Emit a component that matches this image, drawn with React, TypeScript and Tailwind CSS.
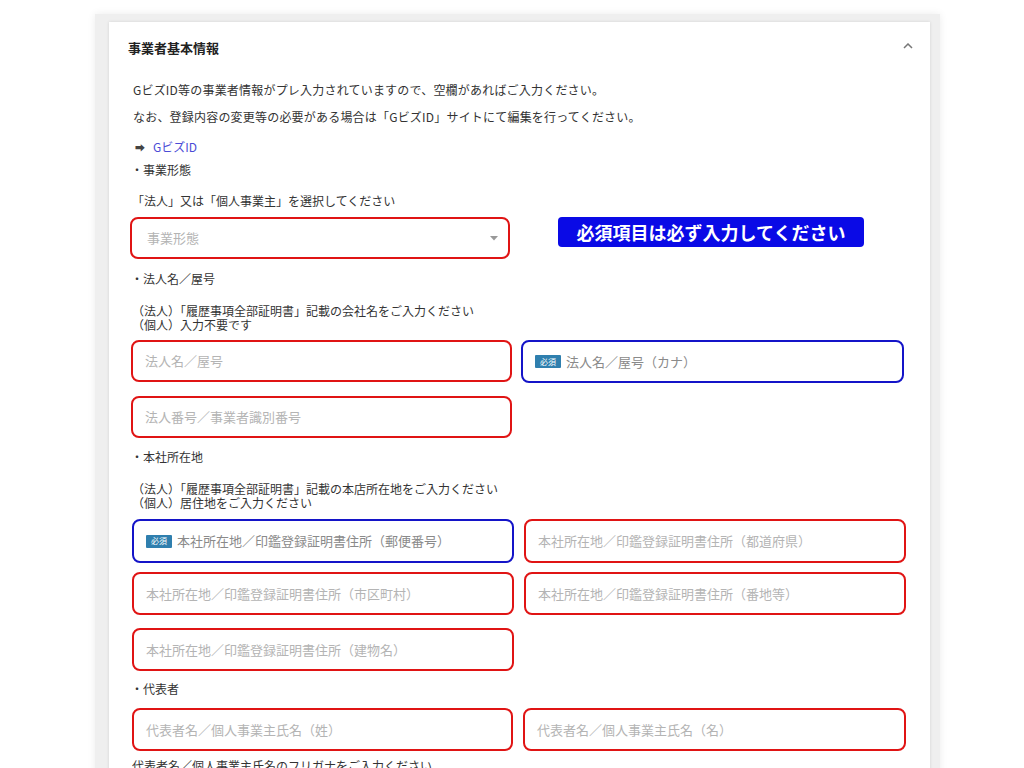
const font = { fontFamily: '"Noto Sans CJK JP", "Noto Sans", sans-serif' }

function Badge() {
  return (
    <span className="inline-flex items-center justify-center w-[26px] h-[13px] mr-[5px] bg-[#2f7fae] text-white text-[8px] leading-none rounded-[1px]">
      必須
    </span>
  )
}

interface FieldProps {
  label: string
  tone?: 'red' | 'blue'
  required?: boolean
  h?: string
}

function Field({ label, tone = 'red', required = false, h = 'h-[43px]' }: FieldProps) {
  const border = tone === 'blue' ? 'border-[#1414c8]' : 'border-[#e01414]'
  return (
    <div className={`${h} ${border} border-2 rounded-[8px] bg-white flex items-center pl-[12px]`}>
      {required && <Badge />}
      <span className={`text-[13px] ${required ? 'text-[#8a8a8a]' : 'text-[#b4b4b4]'}`}>{label}</span>
    </div>
  )
}

export default function App() {
  return (
    <div className="min-h-[768px] bg-white" style={font}>
      <div className="ml-[95px] mt-[14px] w-[845px] bg-[#efefef] pt-[8px] pl-[14px] pr-[10px] shadow-[0_0_8px_rgba(0,0,0,0.08)]">
        <div className="w-[821px] bg-white shadow-[0_0_3px_rgba(0,0,0,0.12)] pb-[20px]">
          <div className="h-[52px] flex items-center justify-between pl-[19px] pr-[17px]">
            <div className="text-[13px] font-bold text-[#222]">事業者基本情報</div>
            <svg width="10" height="6" viewBox="0 0 10 6" className="mb-[4px]">
              <polyline points="1,5 5,1 9,5" fill="none" stroke="#777" strokeWidth="1.5" />
            </svg>
          </div>

          <div className="pl-[23px] pr-[25px] text-[12px] text-[#333]">
            <div className="mt-[1.5px] leading-[27px] pl-[1px] tracking-[0.2px]">
              <div>Gビズ​ID等の事業者情報がプレ入力されていますので、空欄があればご入力ください。</div>
              <div>なお、登録内容の変更等の必要がある場合は「Gビズ​ID」サイトにて編集を行ってください。</div>
            </div>

            <div className="mt-[8.5px] h-[18px] flex items-center pl-[3px]">
              <span className="text-[10px] text-[#444]">➡</span>
              <span className="ml-[8px] text-[#4b4bd6]">Gビズ​ID</span>
            </div>

            <div className="mt-[5px] h-[18px] leading-[18px] -ml-[1px]">・事業形態</div>
            <div className="mt-[13px] h-[18px] leading-[18px]">「法人」又は「個人事業主」を選択してください</div>

            <div className="mt-[7px] w-[380px] h-[42px] -ml-[2px] border-2 border-[#e01414] rounded-[8px] flex items-center justify-between pl-[15px] pr-[10px]">
              <span className="text-[13px] text-[#b4b4b4]">事業形態</span>
              <svg width="8" height="5" viewBox="0 0 8 5">
                <polygon points="0,0 8,0 4,4.5" fill="#999" />
              </svg>
            </div>

            <div className="relative">
              <div className="absolute left-[426px] -top-[42px] w-[306px] h-[30px] rounded-[4px] bg-[#0a0ae6] text-white text-[18px] font-bold flex items-center justify-center">
                必須項目は必ず入力してください
              </div>
            </div>

            <div className="mt-[11px] h-[18px] leading-[18px] -ml-[1px]">・法人名／屋号</div>
            <div className="mt-[16px] leading-[14px]">
              <div>（法人）「履歴事項全部証明書」記載の会社名をご入力ください</div>
              <div>（個人）入力不要です</div>
            </div>

            <div className="mt-[8px] grid grid-cols-[381px_383px] gap-x-[9px] -ml-[1px]">
              <Field label="法人名／屋号" h="h-[42px]" />
              <Field label="法人名／屋号（カナ）" tone="blue" required h="h-[43px]" />
            </div>
            <div className="mt-[13px] w-[381px] -ml-[1px]">
              <Field label="法人番号／事業者識別番号" h="h-[42px]" />
            </div>

            <div className="mt-[10px] h-[18px] leading-[18px] -ml-[1px]">・本社所在地</div>
            <div className="mt-[16px] leading-[14px]">
              <div>（法人）「履歴事項全部証明書」記載の本店所在地をご入力ください</div>
              <div>（個人）居住地をご入力ください</div>
            </div>

            <div className="mt-[9px] grid grid-cols-[382px_382px] gap-x-[10px] gap-y-[9px]">
              <Field label="本社所在地／印鑑登録証明書住所（郵便番号）" tone="blue" required h="h-[44px]" />
              <Field label="本社所在地／印鑑登録証明書住所（都道府県）" h="h-[44px]" />
              <Field label="本社所在地／印鑑登録証明書住所（市区町村）" />
              <Field label="本社所在地／印鑑登録証明書住所（番地等）" />
            </div>
            <div className="mt-[13px] w-[382px]">
              <Field label="本社所在地／印鑑登録証明書住所（建物名）" />
            </div>

            <div className="mt-[9px] h-[18px] leading-[18px] -ml-[1px]">・代表者</div>
            <div className="mt-[10px] grid grid-cols-[381px_383px] gap-x-[10px]">
              <Field label="代表者名／個人事業主氏名（姓）" />
              <Field label="代表者名／個人事業主氏名（名）" />
            </div>
            <div className="mt-[6px] h-[18px] leading-[18px]">代表者名／個人事業主氏名のフリガナをご入力ください</div>
          </div>
        </div>
      </div>
    </div>
  )
}
